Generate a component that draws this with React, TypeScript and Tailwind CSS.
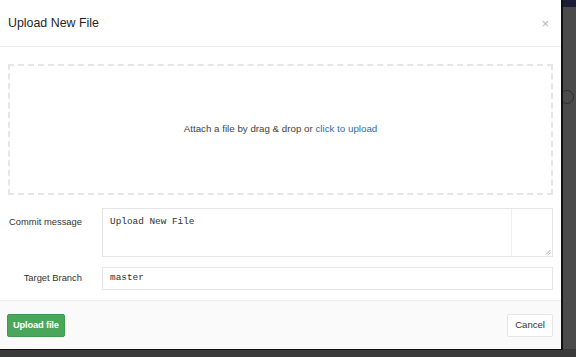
export default function App() {
  const sans = { fontFamily: '"Liberation Sans", Arial, sans-serif' };
  const mono = { fontFamily: '"Liberation Mono", "DejaVu Sans Mono", monospace' };

  return (
    <div className="relative flex h-[357px] w-[576px] overflow-hidden bg-[#4b4b4b]" style={sans}>
      {/* page behind the modal */}
      <div className="absolute right-0 top-0 h-[7px] w-[20px] bg-[#1d1c36]" />
      <div className="absolute bottom-0 left-0 h-[8px] w-full bg-[#3a3a3a]" />
      <div className="absolute right-[2px] top-[90px] h-[14px] w-[14px] rounded-full border border-[#2f2f2f]" />

      <div className="relative z-10 flex h-[350px] w-[563px] flex-col border-r-2 border-b border-[#111] bg-white">
        {/* header */}
        <div className="flex h-[47px] shrink-0 items-center justify-between border-b border-[#ececec] pl-[8px] pr-[12px]">
          <h3 className="text-[12.4px] font-medium text-[#1f1f1f]">Upload New File</h3>
          <span className="text-[13px] leading-none text-[#b5b5b5]">×</span>
        </div>

        {/* body */}
        <div className="flex flex-1 flex-col px-[8px] pt-[17px]">
          <div className="flex h-[131px] items-center justify-center border-2 border-dashed border-[#e6e6e6] text-[9.75px] text-[#444]">
            <span>
              Attach a file by drag &amp; drop or{" "}
              <span className="text-[#2f6cb3]">click to upload</span>
            </span>
          </div>

          <div className="mt-[13px] flex">
            <label className="w-[74px] pt-[7px] text-right text-[9.4px] text-[#333]">Commit message</label>
            <div className="relative ml-[20px] flex h-[49px] flex-1 border border-[#e5e5e5]">
              <div className="flex-1 px-[7px] pt-[6px] text-[9.4px] text-[#2e2e2e]" style={mono}>
                Upload New File
              </div>
              <div className="w-[41px] border-l border-[#efefef]" />
              <svg className="absolute bottom-[1px] right-[1px]" width="6" height="6" viewBox="0 0 6 6">
                <path d="M5.5 1 L1 5.5 M5.5 3.5 L3.5 5.5" stroke="#9a9a9a" strokeWidth="0.8" />
              </svg>
            </div>
          </div>

          <div className="mt-[10px] flex items-center">
            <label className="w-[74px] text-right text-[9.4px] text-[#333]">Target Branch</label>
            <div
              className="ml-[20px] flex h-[23px] flex-1 items-center border border-[#e5e5e5] px-[7px] text-[9.4px] text-[#2e2e2e]"
              style={mono}
            >
              master
            </div>
          </div>
        </div>

        {/* footer */}
        <div className="flex h-[49px] shrink-0 items-center justify-between border-t border-[#ececec] bg-[#fafafa] pl-[7px] pr-[8px]">
          <button className="h-[23px] rounded-[2px] border border-[#3f9a4f] bg-[#4aa65b] px-[5px] text-[9.4px] font-semibold tracking-[-0.2px] text-white">
            Upload file
          </button>
          <button className="h-[23px] rounded-[2px] border border-[#e5e5e5] bg-white px-[7px] text-[9.6px] text-[#333]">
            Cancel
          </button>
        </div>
      </div>
    </div>
  );
}
